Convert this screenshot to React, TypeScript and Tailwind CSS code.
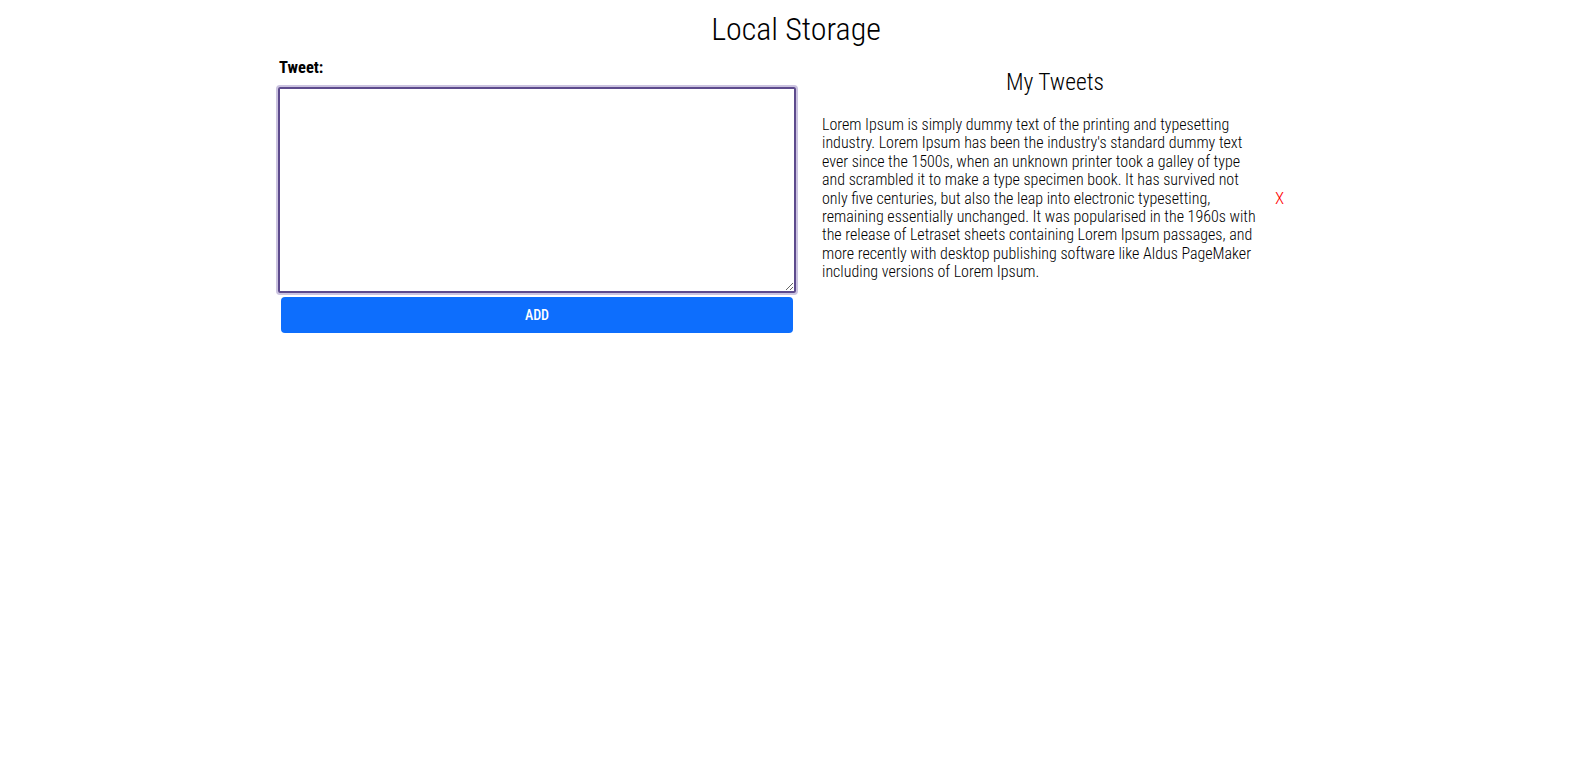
const lorem =
  "Lorem Ipsum is simply dummy text of the printing and typesetting industry. Lorem Ipsum has been the industry's standard dummy text ever since the 1500s, when an unknown printer took a galley of type and scrambled it to make a type specimen book. It has survived not only five centuries, but also the leap into electronic typesetting, remaining essentially unchanged. It was popularised in the 1960s with the release of Letraset sheets containing Lorem Ipsum passages, and more recently with desktop publishing software like Aldus PageMaker including versions of Lorem Ipsum."

export default function App() {
  return (
    <div className="min-h-[775px] bg-white text-black font-['Roboto_Condensed',_'Liberation_Sans',_sans-serif]">
      <h1 className="pt-[11px] text-center text-[32px] leading-[36px] font-light">Local Storage</h1>

      <div className="mx-auto flex w-[1040px]">
        {/* form */}
        <div className="w-[522px]">
          <label className="block pl-[3px] pt-[9px] text-[16.5px] leading-[24px] font-bold">Tweet:</label>
          <div className="mt-[5px] rounded-[4px] border-2 border-[#cbc3e0]">
            <textarea className="block h-[206px] w-full resize-y rounded-[2px] border-2 border-[#5d4b8d] bg-white outline-none" />
          </div>
          <button className="ml-[5px] mt-[2px] h-[36px] w-[512px] rounded-[4px] bg-[#0d6efd] text-[14px] font-medium text-white">
            ADD
          </button>
        </div>

        {/* list */}
        <div className="flex-1 pr-[4px]">
          <h2 className="pt-[22px] text-center text-[23.5px] leading-[26px] font-light">My Tweets</h2>
          <ul className="mt-[21px] pl-[24px]">
            <li className="flex items-center">
              <p className="w-[436px] text-[16px] leading-[18.4px] font-light">{lorem}</p>
              <button className="ml-[17px] text-[17px] font-light text-[#ff0000]">X</button>
            </li>
          </ul>
        </div>
      </div>
    </div>
  )
}
